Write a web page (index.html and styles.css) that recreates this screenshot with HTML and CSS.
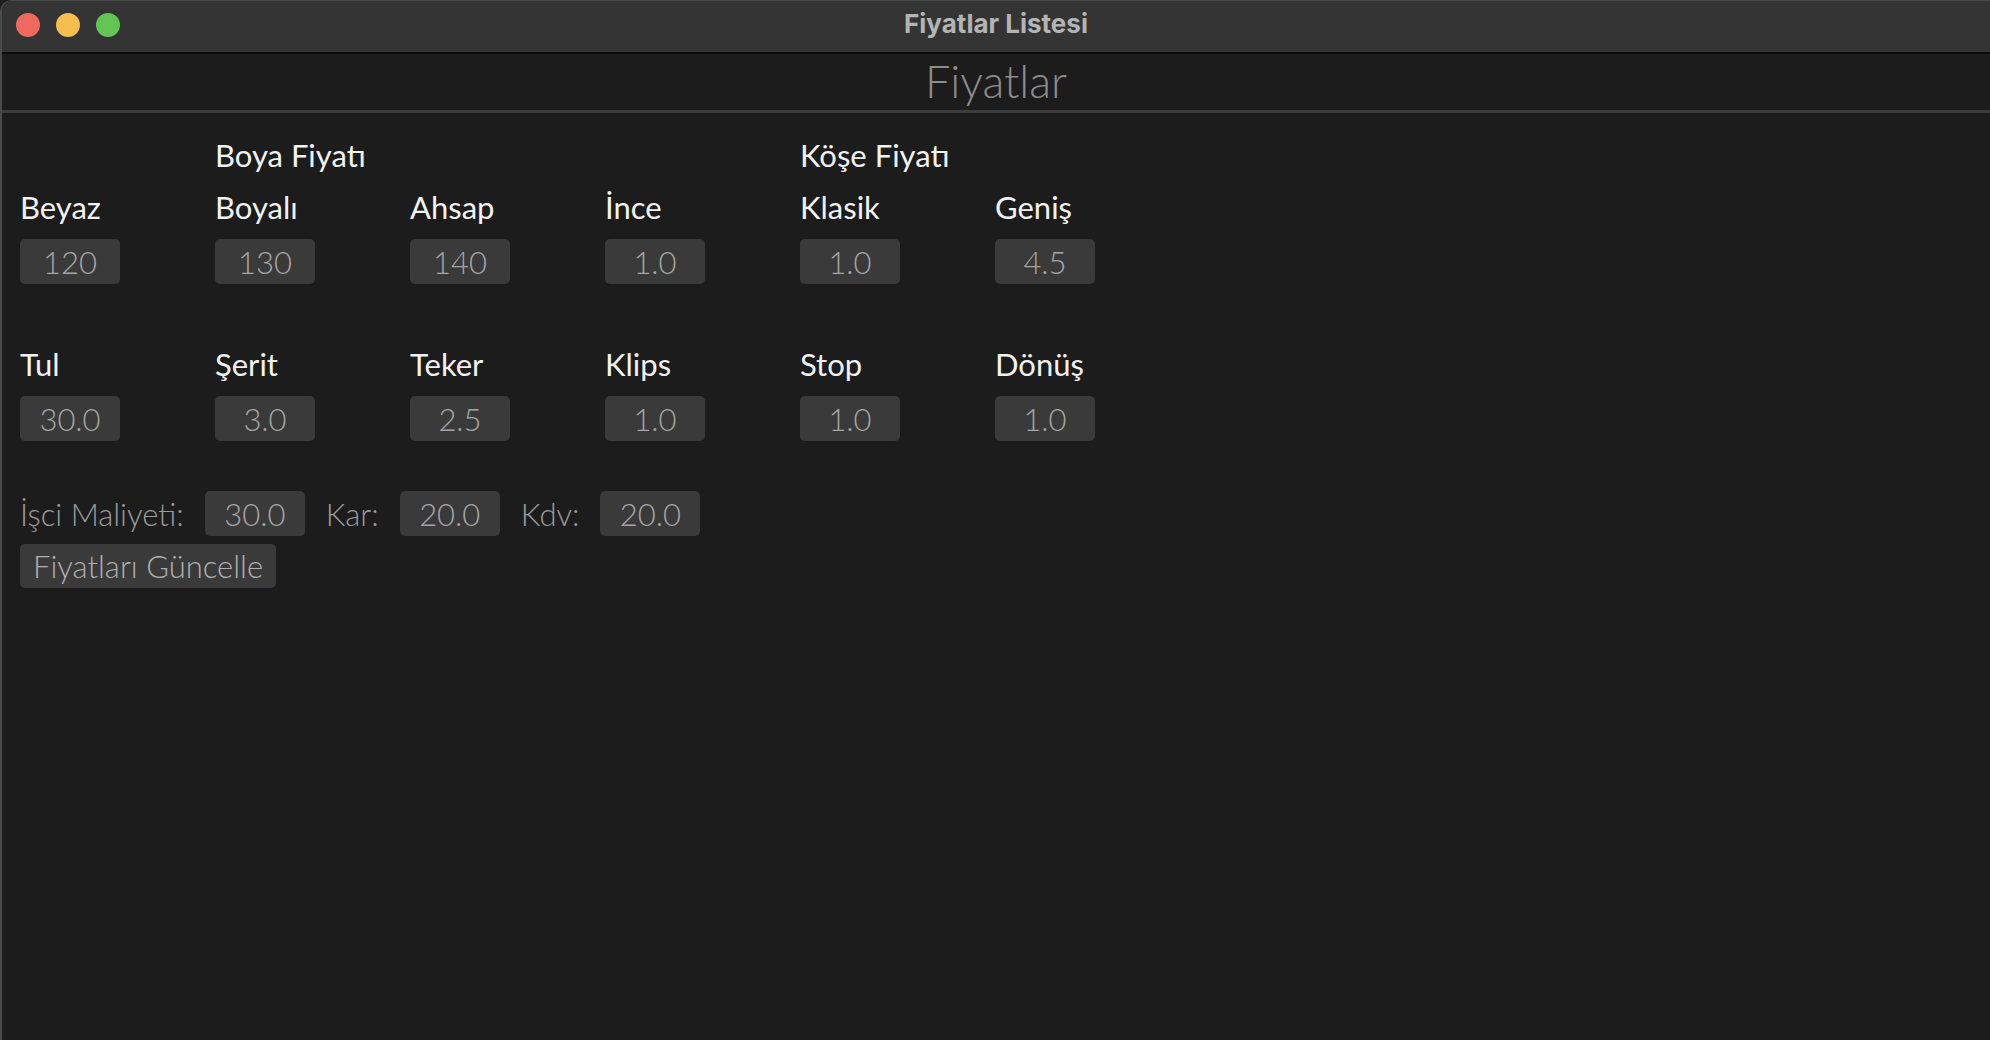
FILE: index.html
```html
<!DOCTYPE html>
<html lang="tr">
<head>
<meta charset="utf-8">
<title>Fiyatlar Listesi</title>
<link rel="stylesheet" href="styles.css">
</head>
<body>
<div class="window">
  <header class="titlebar">
    <div class="lights">
      <span class="light red"></span>
      <span class="light yellow"></span>
      <span class="light green"></span>
    </div>
    <div class="title">Fiyatlar Listesi</div>
    <div class="spacer"></div>
  </header>
  <div class="heading">Fiyatlar</div>
  <div class="separator"></div>
  <main class="content">
    <div class="row group-row">
      <div></div>
      <div class="group">Boya Fiyatı</div>
      <div></div>
      <div></div>
      <div class="group">Köşe Fiyatı</div>
      <div></div>
    </div>
    <div class="row field-row">
      <div class="field"><div class="label">Beyaz</div><input class="num" value="120"></div>
      <div class="field"><div class="label">Boyalı</div><input class="num" value="130"></div>
      <div class="field"><div class="label">Ahsap</div><input class="num" value="140"></div>
      <div class="field"><div class="label">İnce</div><input class="num" value="1.0"></div>
      <div class="field"><div class="label">Klasik</div><input class="num" value="1.0"></div>
      <div class="field"><div class="label">Geniş</div><input class="num" value="4.5"></div>
    </div>
    <div class="row field-row second">
      <div class="field"><div class="label">Tul</div><input class="num" value="30.0"></div>
      <div class="field"><div class="label">Şerit</div><input class="num" value="3.0"></div>
      <div class="field"><div class="label">Teker</div><input class="num" value="2.5"></div>
      <div class="field"><div class="label">Klips</div><input class="num" value="1.0"></div>
      <div class="field"><div class="label">Stop</div><input class="num" value="1.0"></div>
      <div class="field"><div class="label">Dönüş</div><input class="num" value="1.0"></div>
    </div>
    <div class="extras">
      <span class="xlabel">İşci Maliyeti:</span><input class="num" value="30.0">
      <span class="xlabel">Kar:</span><input class="num" value="20.0">
      <span class="xlabel">Kdv:</span><input class="num" value="20.0">
    </div>
    <button class="update">Fiyatları Güncelle</button>
  </main>
</div>
</body>
</html>
```
FILE: styles.css
```css
* { box-sizing: border-box; }
html, body {
  margin: 0;
  padding: 0;
  background: #1e1e1e;
  width: 1990px;
  height: 1040px;
  overflow: hidden;
}
.window {
  height: 1040px;
  background: #1c1c1c;
  border-left: 2px solid #4a4a4a;
  border-top: 1px solid #4a4a4a;
  border-top-left-radius: 12px;
  overflow: hidden;
  font-family: Lato, "Open Sans", sans-serif;
  font-weight: 300;
}
.titlebar {
  height: 53px;
  background: #343434;
  border-bottom: 2px solid #0c0c0c;
  display: grid;
  grid-template-columns: 1fr auto 1fr;
  align-items: center;
}
.lights {
  display: flex;
  gap: 16px;
  padding-left: 14px;
  padding-bottom: 4px;
}
.light {
  width: 24px;
  height: 24px;
  border-radius: 50%;
}
.red { background: #ee6a5f; }
.yellow { background: #f5be4f; }
.green { background: #62c554; }
.title {
  font-family: Inter, "Liberation Sans", sans-serif;
  font-weight: 700;
  font-size: 26px;
  color: #b4b4b4;
  padding-bottom: 6px;
}
.heading {
  height: 56px;
  text-align: center;
  font-size: 45px;
  line-height: 54px;
  color: #8c8c8c;
}
.separator {
  height: 3px;
  background: #3c3c3c;
}
.content {
  padding: 24px 0 0 18px;
}
.row {
  display: grid;
  grid-template-columns: repeat(6, 195px);
}
.group, .label {
  font-size: 31px;
  line-height: 37px;
  font-weight: 400;
  color: #f2f2f2;
  white-space: nowrap;
}
.group-row { margin-bottom: 15px; }
.field {
  display: flex;
  flex-direction: column;
  gap: 13px;
}
.second { margin-top: 62px; }
.num {
  width: 100px;
  height: 45px;
  border: none;
  border-radius: 5px;
  background: #3a3a3a;
  color: #a6a6a6;
  font-family: Lato, "Open Sans", sans-serif;
  font-weight: 300;
  font-size: 31px;
  text-align: center;
  padding: 0;
  outline: none;
}
.extras {
  margin-top: 50px;
  display: flex;
  align-items: center;
  gap: 21px;
}
.xlabel {
  font-size: 31px;
  color: #9c9c9c;
}
.update {
  margin-top: 8px;
  height: 44px;
  padding: 0 13px;
  border: none;
  border-radius: 5px;
  background: #3a3a3a;
  color: #b0b0b0;
  font-family: Lato, "Open Sans", sans-serif;
  font-weight: 300;
  font-size: 31px;
}
```
